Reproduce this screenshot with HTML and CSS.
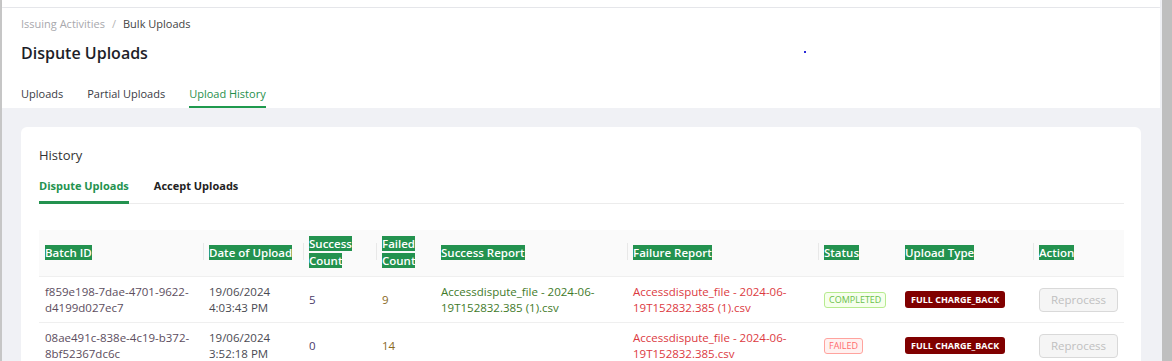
FILE: index.html
```html
<!DOCTYPE html>
<html lang="en">
<head>
  <meta charset="UTF-8">
  <meta name="viewport" content="width=device-width, initial-scale=1.0">
  <title>Dispute Uploads</title>
  <link rel="stylesheet" href="styles.css">
</head>
<body>

  <div class="frame">
    <div class="edge"></div>

    <div class="page">
      <div class="topbar"></div>

      <div class="header">
        <div class="breadcrumb">
          <span class="crumb">Issuing Activities</span>
          <span class="sep">/</span>
          <span class="crumb current">Bulk Uploads</span>
        </div>
        <h1 class="title">Dispute Uploads</h1>
        <span class="dot"></span>
        <div class="tabs">
          <span class="tab">Uploads</span>
          <span class="tab">Partial Uploads</span>
          <span class="tab active">Upload History</span>
        </div>
      </div>

      <div class="content">
        <div class="card">
          <h2 class="card-title">History</h2>

          <div class="subtabs">
            <span class="subtab active">Dispute Uploads</span>
            <span class="subtab">Accept Uploads</span>
          </div>

          <table class="history">
            <colgroup>
              <col style="width: 164px">
              <col style="width: 100px">
              <col style="width: 73px">
              <col style="width: 59px">
              <col style="width: 192px">
              <col style="width: 191px">
              <col style="width: 81px">
              <col style="width: 134px">
              <col style="width: 91px">
            </colgroup>
            <thead>
              <tr>
                <th><mark>Batch ID</mark></th>
                <th class="split"><mark>Date of Upload</mark></th>
                <th class="split"><mark>Success Count</mark></th>
                <th class="split"><mark>Failed Count</mark></th>
                <th><mark>Success Report</mark></th>
                <th class="split"><mark>Failure Report</mark></th>
                <th class="split"><mark>Status</mark></th>
                <th><mark>Upload Type</mark></th>
                <th class="split"><mark>Action</mark></th>
              </tr>
            </thead>
            <tbody>
              <tr>
                <td class="batch">f859e198-7dae-4701-9622-d4199d027ec7</td>
                <td>19/06/2024<br>4:03:43 PM</td>
                <td class="ok-count">5</td>
                <td class="fail-count">9</td>
                <td class="ok-file">Accessdispute_file - 2024-06-19T152832.385 (1).csv</td>
                <td class="fail-file">Accessdispute_file - 2024-06-19T152832.385 (1).csv</td>
                <td><span class="tag completed">COMPLETED</span></td>
                <td><span class="type">FULL CHARGE_BACK</span></td>
                <td><button class="btn" disabled>Reprocess</button></td>
              </tr>
              <tr>
                <td class="batch">08ae491c-838e-4c19-b372-8bf52367dc6c</td>
                <td>19/06/2024<br>3:52:18 PM</td>
                <td class="ok-count">0</td>
                <td class="fail-count">14</td>
                <td class="ok-file"></td>
                <td class="fail-file">Accessdispute_file - 2024-06-19T152832.385.csv</td>
                <td><span class="tag failed">FAILED</span></td>
                <td><span class="type">FULL CHARGE_BACK</span></td>
                <td><button class="btn" disabled>Reprocess</button></td>
              </tr>
            </tbody>
          </table>
        </div>
      </div>
    </div>

    <div class="scrollbar"></div>
  </div>

</body>
</html>
```

FILE: styles.css
```css
body {
  margin: 0;
  font-family: "Open Sans", Arial, sans-serif;
  background-color: #f0f1f5;
  color: #333;
  overflow: hidden;
}
.frame {
  display: flex;
  height: 361px;
}
.edge {
  width: 2px;
  background-color: #c6c6c6;
}
.scrollbar {
  width: 10px;
  background-color: #bfbfbf;
}
.page {
  flex: 1;
  padding-right: 2px;
  background-color: #f0f1f5;
}
.topbar {
  height: 7px;
  background-color: #fff;
  box-shadow: 0 1px 2px rgba(0, 0, 0, 0.06);
  margin-bottom: 1px;
}
.header {
  position: relative;
  background-color: #fff;
  padding: 7px 19px 0;
  height: 93px;
}
.breadcrumb {
  font-size: 11px;
  line-height: 17px;
  display: flex;
  gap: 7px;
}
.crumb {
  color: #a8a8ad;
}
.crumb.current {
  color: #444;
}
.sep {
  color: #b5b5b5;
}
.title {
  margin: 9px 0 0;
  font-size: 16px;
  line-height: 24px;
  font-weight: 600;
  color: #1e1e28;
}
.dot {
  position: absolute;
  left: 802px;
  top: 43px;
  width: 2px;
  height: 2px;
  background-color: #2a2ad8;
}
.tabs {
  display: flex;
  gap: 24px;
  margin-top: 20px;
  font-size: 11px;
}
.tab {
  color: #3a3a44;
  padding-bottom: 4px;
  line-height: 17px;
}
.tab.active {
  color: #1f8f4c;
  border-bottom: 2px solid #1f9a4e;
}
.content {
  padding: 19px 19px 0;
}
.card {
  background-color: #fff;
  border-radius: 6px;
  padding: 18px 17px 20px 18px;
}
.card-title {
  margin: 0;
  font-size: 13px;
  font-weight: 400;
  line-height: 20px;
  color: #333;
}
.subtabs {
  display: flex;
  gap: 25px;
  margin-top: 12px;
  border-bottom: 1px solid #ececec;
}
.subtab {
  font-size: 11px;
  font-weight: 700;
  line-height: 17px;
  color: #222;
  padding-bottom: 9px;
  margin-bottom: -1px;
}
.subtab.active {
  color: #23924f;
  border-bottom: 3px solid #23924f;
  padding-bottom: 7px;
}
.history {
  width: 100%;
  margin-top: 26px;
  border-collapse: collapse;
  table-layout: fixed;
  font-size: 11.5px;
}
.history th {
  position: relative;
  background-color: #fafafa;
  text-align: left;
  font-weight: 600;
  padding: 5px 6px 7px;
  height: 32px;
  line-height: 17px;
  border-bottom: 1px solid #efefef;
}
.history th.split::before {
  content: "";
  position: absolute;
  left: 0;
  top: 13px;
  height: 17px;
  width: 1px;
  background-color: #e8e8e8;
}
.history mark {
  background-color: #23924f;
  color: #fff;
}
.history td {
  padding: 6px 6px;
  height: 33px;
  line-height: 16px;
  color: #4a4a52;
  border-bottom: 1px solid #efefef;
  vertical-align: middle;
}
.history td.batch {
  color: #5c4d5e;
}
.history td.ok-count {
  color: #4a3b6a;
}
.history td.fail-count {
  color: #8a6a1f;
}
.history td.ok-file {
  color: #3f7a2a;
}
.history td.fail-file {
  color: #dc3a3f;
}
.tag {
  display: inline-block;
  font-size: 9px;
  line-height: 14px;
  padding: 0 4px;
  border-radius: 3px;
  border: 1px solid;
}
.tag.completed {
  color: #6ac04a;
  background-color: #f6ffed;
  border-color: #b7eb8f;
}
.tag.failed {
  color: #ff6b6d;
  background-color: #fff1f0;
  border-color: #ffa39e;
}
.type {
  display: inline-block;
  font-size: 9px;
  font-weight: 700;
  line-height: 17px;
  padding: 0 6px;
  border-radius: 3px;
  background-color: #800000;
  color: #fff;
}
.btn {
  font-family: inherit;
  font-size: 11.5px;
  width: 79px;
  height: 24px;
  border: 1px solid #d9d9d9;
  border-radius: 4px;
  background-color: #f5f5f5;
  color: #c0c0c0;
}
```
